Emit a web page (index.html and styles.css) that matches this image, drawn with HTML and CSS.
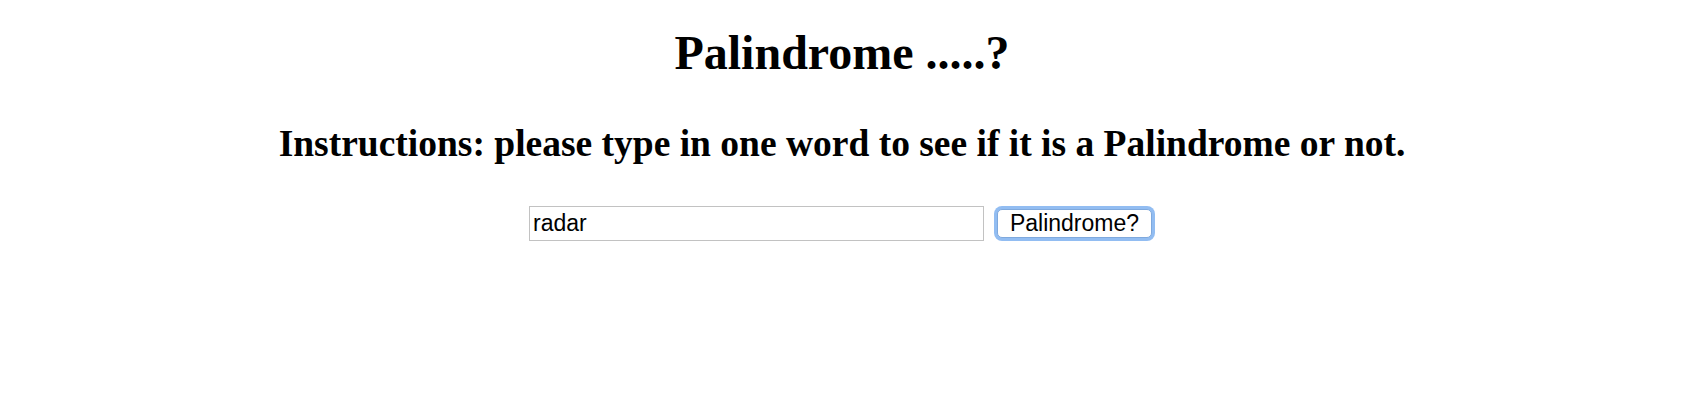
FILE: index.html
```html
<!DOCTYPE html>
<html>
<head>
<meta charset="utf-8">
<title>Palindrome</title>
<link rel="stylesheet" href="styles.css">
</head>
<body>
<main class="page">
  <h1 class="title">Palindrome .....?</h1>
  <h2 class="instructions">Instructions: please type in one word to see if it is a Palindrome or not.</h2>
  <form class="check-form">
    <input class="word-input" type="text" value="radar">
    <button class="check-button" type="button">Palindrome?</button>
  </form>
</main>
</body>
</html>
```
FILE: styles.css
```css
html, body {
  margin: 0;
  padding: 0;
  background: #ffffff;
}
.page {
  padding-top: 26px;
  text-align: center;
  font-family: "Liberation Serif", "Times New Roman", serif;
  color: #000;
}
.title {
  font-size: 48px;
  font-weight: bold;
  line-height: 53px;
  margin: 0 0 45px;
}
.instructions {
  font-size: 37.5px;
  font-weight: bold;
  line-height: 40px;
  margin: 0 0 42px;
}
.check-form {
  display: flex;
  justify-content: center;
  align-items: center;
  gap: 10px;
  margin: 0;
}
.word-input {
  box-sizing: border-box;
  width: 455px;
  height: 35px;
  border: 1px solid #c2c2c2;
  padding: 0 3px;
  font-family: "Liberation Sans", Arial, sans-serif;
  font-size: 23px;
  color: #000;
  outline: none;
  background: #fff;
}
.check-button {
  box-sizing: border-box;
  width: 155px;
  height: 29px;
  margin: 0 3px;
  border: 1px solid #7fa9dd;
  border-radius: 5px;
  background: #fff;
  box-shadow: 0 0 0 3px #92bdf2;
  font-family: "Liberation Sans", Arial, sans-serif;
  font-size: 23px;
  line-height: 27px;
  padding: 0;
  color: #000;
}
```
